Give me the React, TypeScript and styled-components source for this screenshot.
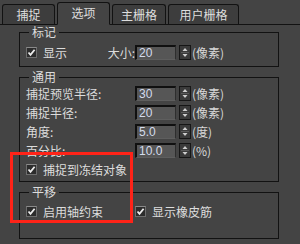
import React from 'react';
import styled, { createGlobalStyle } from 'styled-components';

const GlobalStyle = createGlobalStyle`
  html, body {
    margin: 0;
    padding: 0;
    background: #444444;
    overflow: hidden;
  }
  body {
    font-family: "Noto Sans CJK SC", "Noto Sans", sans-serif;
    font-size: 12px;
    color: #dcdcdc;
  }
`;

const Screen = styled.div`
  position: relative;
  width: 300px;
  height: 244px;
  background: #444444;
`;

const TabBar = styled.div`
  display: flex;
  align-items: flex-end;
  gap: 2px;
  height: 24px;
  padding-left: 2px;
  border-bottom: 1px solid #121212;
`;

const Tab = styled.div<{ $w: number; $active?: boolean }>`
  box-sizing: border-box;
  width: ${(p) => p.$w}px;
  height: ${(p) => (p.$active ? 23 : 20)}px;
  margin-bottom: ${(p) => (p.$active ? -1 : 0)}px;
  display: flex;
  align-items: center;
  justify-content: center;
  padding-bottom: ${(p) => (p.$active ? 2 : 0)}px;
  background: ${(p) => (p.$active ? '#444444' : '#3d3d3d')};
  border: 1px solid #121212;
  border-bottom: ${(p) => (p.$active ? '1px solid #444444' : 'none')};
  border-radius: 3px 3px 0 0;
  line-height: 12px;
  color: #dedede;
`;

const Panel = styled.div`
  display: flex;
  flex-direction: column;
  gap: 4px;
  padding: 1px 21px 0 19px;
`;

const Group = styled.fieldset<{ $pt: number; $pb: number }>`
  margin: 0;
  min-width: 0;
  border: 1px solid #121212;
  padding: ${(p) => p.$pt}px 0 ${(p) => p.$pb}px 6px;
  display: flex;
  flex-direction: column;
  gap: 4px;
`;

const Legend = styled.legend`
  margin-left: 3px;
  padding: 0 3px;
  line-height: 12px;
  font-size: 12px;
`;

const Row = styled.div`
  display: flex;
  align-items: center;
  height: 15px;
`;

const LabelCell = styled.div<{ $split?: boolean }>`
  width: 109px;
  flex: none;
  display: flex;
  align-items: center;
  justify-content: ${(p) => (p.$split ? 'space-between' : 'flex-start')};
  line-height: 12px;
`;

const NumInput = styled.div`
  box-sizing: border-box;
  width: 41px;
  height: 15px;
  margin-right: 3px;
  padding-left: 2px;
  display: flex;
  align-items: center;
  background: #565656;
  border-top: 2px solid #101010;
  border-left: 2px solid #101010;
  border-right: 1px solid #2e2e2e;
  border-bottom: 1px solid #5e5e5e;
  font-family: "Liberation Sans", Arial, sans-serif;
  font-size: 12px;
  color: #d4dcec;
`;

const SpinBox = styled.div`
  box-sizing: border-box;
  width: 12px;
  height: 15px;
  margin-right: 1px;
  background: #3a3a3a;
  border: 1px solid #161616;
  display: flex;
`;

const Unit = styled.span`
  line-height: 12px;
  color: #d8d8d8;
`;

const CheckLabel = styled.label`
  display: flex;
  align-items: center;
  gap: 6px;
  line-height: 12px;
`;

const Box = styled.span`
  box-sizing: border-box;
  width: 11px;
  height: 11px;
  flex: none;
  display: flex;
  background: #2c2c2c;
  border: 1px solid #6e6e6e;
  border-top-color: #8a8a8a;
`;

const Highlight = styled.div`
  position: absolute;
  left: 10px;
  top: 152px;
  width: 123px;
  height: 71px;
  box-sizing: border-box;
  border: 3px solid #ff2318;
  pointer-events: none;
`;

const Check = ({ label }: { label: string }) => (
  <CheckLabel>
    <Box>
      <svg width="9" height="9" viewBox="0 0 9 9">
        <path d="M1.5 4.5 L3.5 6.8 L7.6 1.8" fill="none" stroke="#ececec" strokeWidth="1.8" />
      </svg>
    </Box>
    {label}
  </CheckLabel>
);

const Spinner = () => (
  <SpinBox>
    <svg width="10" height="13" viewBox="0 0 10 13">
      <path d="M5 2 L7.5 5 L2.5 5 Z" fill="#cfcfcf" />
      <line x1="1" y1="6.5" x2="9" y2="6.5" stroke="#5a5a5a" strokeWidth="1" />
      <path d="M2.5 8 L7.5 8 L5 11 Z" fill="#cfcfcf" />
    </svg>
  </SpinBox>
);

const Field = ({ value, unit }: { value: string; unit: string }) => (
  <>
    <NumInput>{value}</NumInput>
    <Spinner />
    <Unit>{unit}</Unit>
  </>
);

const params = [
  { label: '捕捉预览半径:', value: '30', unit: '(像素)' },
  { label: '捕捉半径:', value: '20', unit: '(像素)' },
  { label: '角度:', value: '5.0', unit: '(度)' },
  { label: '百分比:', value: '10.0', unit: '(%)' },
];

const App = () => {
  return (
    <Screen>
      <GlobalStyle />
      <TabBar>
        <Tab $w={53}>捕捉</Tab>
        <Tab $w={53} $active>
          选项
        </Tab>
        <Tab $w={54}>主栅格</Tab>
        <Tab $w={71}>用户栅格</Tab>
      </TabBar>
      <Panel>
        <Group $pt={7} $pb={6}>
          <Legend>标记</Legend>
          <Row>
            <LabelCell $split>
              <Check label="显示" />
              <span>大小:</span>
            </LabelCell>
            <Field value="20" unit="(像素)" />
          </Row>
        </Group>
        <Group $pt={3} $pb={4}>
          <Legend>通用</Legend>
          {params.map((p) => (
            <Row key={p.label}>
              <LabelCell>{p.label}</LabelCell>
              <Field value={p.value} unit={p.unit} />
            </Row>
          ))}
          <Row>
            <Check label="捕捉到冻结对象" />
          </Row>
        </Group>
        <Group $pt={6} $pb={19}>
          <Legend>平移</Legend>
          <Row>
            <LabelCell>
              <Check label="启用轴约束" />
            </LabelCell>
            <Check label="显示橡皮筋" />
          </Row>
        </Group>
      </Panel>
      <Highlight />
    </Screen>
  );
};

export default App;
